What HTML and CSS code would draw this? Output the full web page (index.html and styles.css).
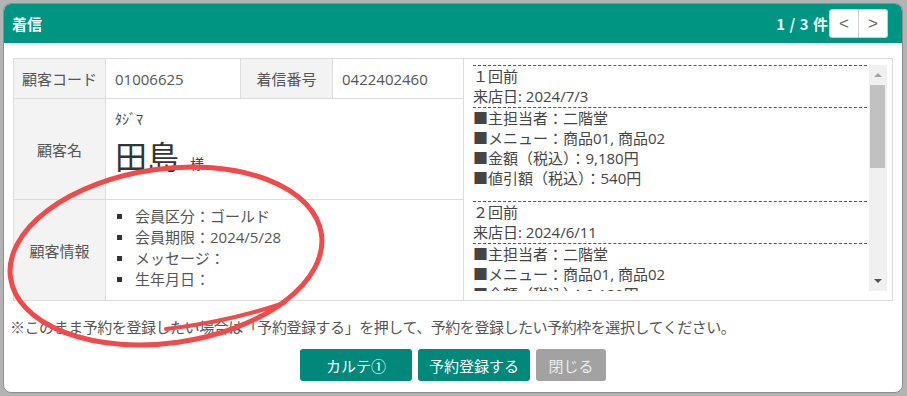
FILE: index.html
```html
<!DOCTYPE html>
<html lang="ja">
<head>
<meta charset="utf-8">
<link rel="stylesheet" href="styles.css">
</head>
<body>
<div class="dialog">
  <div class="header">
    <span class="title">着信</span>
    <div class="pager">
      <span class="count">1 / 3 件</span>
      <div class="nav">
        <button class="navbtn prev">&lt;</button><button class="navbtn next">&gt;</button>
      </div>
    </div>
  </div>
  <div class="content">
    <div class="grid">
      <div class="cell label">顧客コード</div>
      <div class="cell value">01006625</div>
      <div class="cell label">着信番号</div>
      <div class="cell value">0422402460</div>
      <div class="cell history">
        <div class="scrollbox">
          <div class="scrollcontent">
            <div class="visit">
              <div class="visit-head">
                <div>１回前</div>
                <div>来店日: 2024/7/3</div>
              </div>
              <div class="visit-body">
                <div>■主担当者：二階堂</div>
                <div>■メニュー：商品01, 商品02</div>
                <div>■金額（税込）：9,180円</div>
                <div>■値引額（税込）：540円</div>
              </div>
            </div>
            <div class="visit">
              <div class="visit-head">
                <div>２回前</div>
                <div>来店日: 2024/6/11</div>
              </div>
              <div class="visit-body">
                <div>■主担当者：二階堂</div>
                <div>■メニュー：商品01, 商品02</div>
                <div>■金額（税込）：9,180円</div>
              </div>
            </div>
          </div>
          <div class="scrollbar">
            <div class="arrow up"></div>
            <div class="track"><div class="thumb"></div></div>
            <div class="arrow down"></div>
          </div>
        </div>
      </div>
      <div class="cell label">顧客名</div>
      <div class="cell value name-cell">
        <div class="kana">ﾀｼﾞﾏ</div>
        <div class="name">田島<span class="sama">様</span></div>
      </div>
      <div class="cell label">顧客情報</div>
      <div class="cell value info-cell">
        <ul class="info">
          <li>会員区分：ゴールド</li>
          <li>会員期限：2024/5/28</li>
          <li>メッセージ：</li>
          <li>生年月日：</li>
        </ul>
      </div>
    </div>
    <p class="note">※このまま予約を登録したい場合は「予約登録する」を押して、予約を登録したい予約枠を選択してください。</p>
    <div class="actions">
      <button class="btn primary karte">カルテ①</button>
      <button class="btn primary reserve">予約登録する</button>
      <button class="btn disabled close">閉じる</button>
    </div>
  </div>
</div>
<svg class="annot" width="907" height="396" viewBox="0 0 907 396">
  <ellipse cx="166" cy="256" rx="157" ry="87" transform="rotate(-8 166 256)" fill="none" stroke="#f24a4a" stroke-width="5"/>
  <path d="M 166 329 Q 228 322 284 303" fill="none" stroke="#f24a4a" stroke-width="4" stroke-linecap="round"/>
</svg>
</body>
</html>
```

FILE: styles.css
```css
* { box-sizing: border-box; }
html, body { margin: 0; padding: 0; }
body {
  width: 907px;
  height: 396px;
  background: #b3b3b3;
  padding: 3px 4px 3px 3px;
  position: relative;
  overflow: hidden;
  font-family: "Open Sans", "Noto Sans CJK JP", sans-serif;
  font-size: 15px;
  color: #555;
}
.dialog {
  width: 900px;
  height: 390px;
  background: #fff;
  border: 1px solid #8e8e8e;
  border-radius: 8px;
  overflow: hidden;
  display: flex;
  flex-direction: column;
}
.header {
  height: 39px;
  background: #009482;
  display: flex;
  align-items: center;
  justify-content: space-between;
  padding: 0 14px 0 8px;
  color: #fff;
}
.title {
  font-family: "Noto Sans CJK JP", sans-serif;
  font-weight: bold;
  font-size: 15px;
  line-height: 20px;
}
.pager { display: flex; align-items: center; }
.count {
  font-family: "Noto Sans CJK JP", sans-serif;
  font-weight: bold;
  font-size: 15px;
  color: #e8f4f2;
  word-spacing: 1px;
}
.nav { display: flex; margin-left: 1px; }
.navbtn {
  width: 30px;
  height: 29px;
  background: #fff;
  border: 1px solid #cfcfcf;
  color: #666;
  font-family: "Liberation Sans", sans-serif;
  font-size: 17px;
  padding: 0;
  line-height: 27px;
}
.navbtn.prev { border-radius: 3px 0 0 3px; }
.navbtn.next { border-radius: 0 3px 3px 0; border-left: none; width: 29px; }

.content {
  padding: 15px 9px 0 9px;
  flex: 1;
}
.grid {
  display: grid;
  grid-template-columns: 92px 135px 92px 131px 429px;
  grid-template-rows: 40px 101px 101px;
  border-top: 1px solid #dcdcdc;
  border-left: 1px solid #dcdcdc;
}
.cell {
  border-right: 1px solid #dcdcdc;
  border-bottom: 1px solid #dcdcdc;
}
.label {
  background: #f3f3f3;
  display: flex;
  align-items: center;
  justify-content: center;
  font-family: "Noto Sans CJK JP", sans-serif;
  color: #555;
}
.value {
  display: flex;
  align-items: center;
  padding-left: 9px;
  color: #555;
}
.name-cell, .info-cell { grid-column: 2 / span 3; }
.name-cell {
  flex-direction: column;
  align-items: flex-start;
  justify-content: flex-start;
}
.kana {
  font-family: "Noto Sans CJK JP", sans-serif;
  font-size: 14px;
  line-height: 18px;
  margin-top: 10px;
  color: #444;
}
.name {
  font-family: "Noto Sans CJK JP", sans-serif;
  font-size: 32px;
  line-height: 36px;
  margin-top: 10px;
  color: #333;
}
.sama {
  font-size: 14px;
  margin-left: 11px;
  color: #444;
}
.info-cell { align-items: flex-start; padding-left: 0; }
.info {
  list-style: none;
  margin: 0;
  padding: 6px 0 0 0;
}
.info li {
  position: relative;
  padding-left: 29px;
  line-height: 21px;
  color: #555;
  font-family: "Open Sans", "Noto Sans CJK JP", sans-serif;
}
.info li::before {
  content: "";
  position: absolute;
  left: 11px;
  top: 8px;
  width: 5px;
  height: 5px;
  background: #333;
}
.history {
  grid-column: 5;
  grid-row: 1 / span 3;
  padding: 6px 5px 8px 9px;
}
.scrollbox {
  height: 226px;
  display: flex;
}
.scrollcontent {
  flex: 1;
  overflow: hidden;
  padding-right: 2px;
  color: #444;
  line-height: 20px;
  font-family: "Open Sans", "Noto Sans CJK JP", sans-serif;
}
.visit-head {
  border-top: 1px dashed #555;
  border-bottom: 1px dashed #555;
  padding-bottom: 1px;
}
.visit-body { margin-bottom: 13px; }
.scrollbar {
  width: 18px;
  background: #f0f0f0;
  display: flex;
  flex-direction: column;
}
.arrow {
  height: 20px;
  position: relative;
}
.arrow::after {
  content: "";
  position: absolute;
  left: 5px;
  width: 0;
  height: 0;
  border-left: 4px solid transparent;
  border-right: 4px solid transparent;
}
.arrow.up::after { top: 8px; border-bottom: 4px solid #a3a3a3; }
.arrow.down::after { top: 8px; border-top: 4px solid #505050; }
.track { flex: 1; padding: 0 2px 0 1px; }
.thumb { height: 83px; background: #c1c1c1; }

.note {
  margin: 16px 0 0 -3px;
  font-family: "Noto Sans CJK JP", sans-serif;
  font-size: 15px;
  line-height: 20px;
  color: #555;
  letter-spacing: -0.45px;
}
.actions {
  display: flex;
  justify-content: center;
  margin-top: 12px;
}
.btn {
  height: 32px;
  border: none;
  border-radius: 3px;
  color: #fff;
  font-family: "Noto Sans CJK JP", sans-serif;
  font-size: 15px;
  padding: 0;
  margin: 0 3px;
}
.primary { background: #00887a; }
.karte, .reserve { width: 112px; }
.close { width: 70px; }
.disabled { background: #a2a2a2; color: #ececec; }

.annot {
  position: absolute;
  left: 0;
  top: 0;
  pointer-events: none;
}
```
